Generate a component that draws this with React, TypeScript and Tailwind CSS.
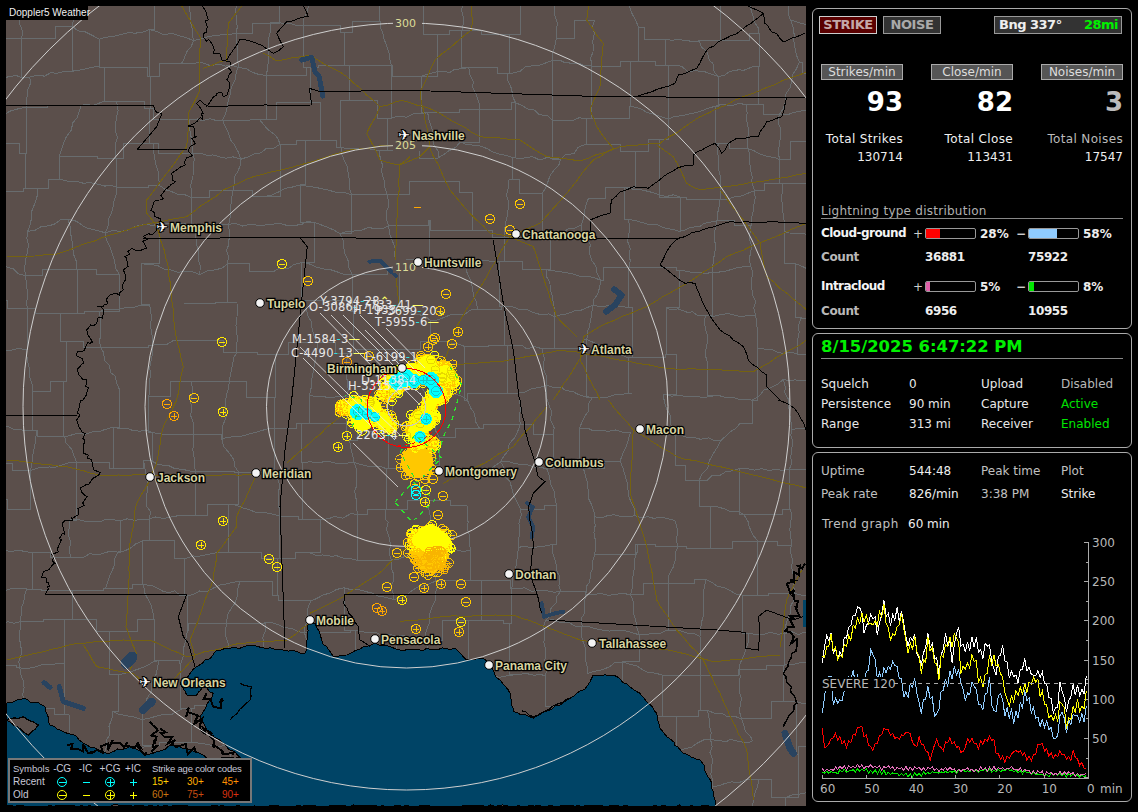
import React from "react";

type P = [number, number];
function mulberry(a: number) {
  return () => {
    a |= 0; a = (a + 0x6d2b79f5) | 0;
    let t = Math.imul(a ^ (a >>> 15), 1 | a);
    t = (t + Math.imul(t ^ (t >>> 7), 61 | t)) ^ t;
    return ((t ^ (t >>> 14)) >>> 0) / 4294967296;
  };
}
const z = (ox: number, oy: number, a: number[]): P[] => {
  const r: P[] = [];
  for (let i = 0; i < a.length; i += 2) r.push([ox + a[i] / 3, oy + a[i + 1] / 3]);
  return r;
};
const TL = (...a: number[]) => z(0, 0, a);
const TR = (...a: number[]) => z(400, 0, a);
const BL = (...a: number[]) => z(0, 400, a);
const BR = (...a: number[]) => z(400, 400, a);
const d = (p: P[], close = false) => "M" + p.map((q) => q[0].toFixed(1) + " " + q[1].toFixed(1)).join("L") + (close ? "Z" : "");
function wiggle(p: P[], amp: number, step: number, seed: number): P[] {
  const r = mulberry(seed);
  const out: P[] = [];
  for (let i = 0; i < p.length - 1; i++) {
    const [x0, y0] = p[i];
    const [x1, y1] = p[i + 1];
    const n = Math.max(1, Math.round(Math.hypot(x1 - x0, y1 - y0) / step));
    for (let k = 0; k < n; k++) {
      const t = k / n;
      const j = k === 0 ? 0 : amp;
      out.push([x0 + (x1 - x0) * t + (r() - 0.5) * j, y0 + (y1 - y0) * t + (r() - 0.5) * j]);
    }
  }
  out.push(p[p.length - 1]);
  return out;
}

function counties() {
  const r = mulberry(77);
  const cell = 40;
  const nx = 22, ny = 22;
  const v: P[][] = [];
  for (let i = 0; i < nx; i++) {
    v[i] = [];
    for (let j = 0; j < ny; j++) v[i][j] = [i * cell - 10 + (r() - 0.5) * 22, j * cell - 10 + (r() - 0.5) * 22];
  }
  let s = "";
  const edge = (a: P, b: P) => {
    if (r() < 0.12) return;
    const mode = r();
    if (mode < 0.5) {
      const mx = Math.abs(a[0] - b[0]) > Math.abs(a[1] - b[1]) ? a[0] + (b[0] - a[0]) * r() : a[0];
      const my = Math.abs(a[0] - b[0]) > Math.abs(a[1] - b[1]) ? a[1] : a[1] + (b[1] - a[1]) * r();
      s += d([a, [mx, my], [mx, b[1]], b]);
    } else {
      s += d(wiggle([a, b], 3.5, 7, Math.floor(r() * 99999)));
    }
  };
  for (let i = 0; i < nx; i++)
    for (let j = 0; j < ny; j++) {
      if (i < nx - 1) edge(v[i][j], v[i + 1][j]);
      if (j < ny - 1) edge(v[i][j], v[i][j + 1]);
    }
  return s;
}
const COUNTY = counties();

const STATE: string[] = [
  d(TL(18, 315, 460, 315, 467, 335, 485, 342, 470, 380, 413, 447, 560, 447)),
  d(wiggle(TL(605, 18, 625, 60, 610, 100, 640, 155, 665, 180, 690, 185, 695, 215, 680, 240, 690, 260, 670, 290, 650, 280, 620, 320, 600, 300, 590, 310, 605, 340, 590, 365, 565, 380, 590, 410, 570, 440, 575, 470, 545, 500, 515, 520, 525, 545, 495, 570, 480, 600, 460, 610, 465, 650, 480, 670, 470, 690, 430, 710, 440, 745, 395, 745, 375, 770, 385, 800, 370, 810, 370, 870, 330, 885, 310, 920, 290, 920, 310, 940, 290, 970, 260, 990, 270, 1030, 230, 1060, 250, 1090, 235, 1120, 260, 1140, 250, 1199), 6.5, 3.5, 3)),
  d(wiggle(BL(250, 0, 230, 60, 255, 120, 250, 160, 275, 180, 300, 220, 240, 265, 260, 290, 215, 355, 190, 385, 160, 470, 165, 490, 130, 515, 150, 560, 135, 583), 6.5, 3.5, 4)),
  d(BL(18, 45, 232, 45)),
  d(BL(135, 583, 560, 583, 535, 650, 550, 710, 565, 730, 585, 800)),
  d(wiggle(TL(625, 320, 795, 315, 935, 315, 928, 265, 960, 275, 1230, 270), 0.5, 30, 6)),
  d(wiggle(TL(680, 180, 720, 118, 770, 130, 820, 160, 850, 140, 830, 100, 860, 65, 925, 50, 910, 18), 2, 6, 8)),
  d(TR(0, 270, 610, 290, 1215, 293)),
  d(wiggle(TR(705, 290, 825, 250, 835, 225, 890, 205, 925, 145, 1025, 90, 1090, 40, 1045, 18), 2, 6, 9)),
  d(wiggle(TR(1090, 40, 1095, 70, 1150, 125, 1215, 100), 2, 5, 10)),
  d(wiggle(TR(1160, 290, 1145, 350, 1100, 365, 1075, 410, 1010, 415, 985, 430, 965, 460, 945, 430, 905, 450, 880, 465, 880, 495, 830, 505, 790, 530, 745, 565, 700, 560, 660, 575, 635, 600, 630, 640, 595, 650, 570, 660, 570, 695), 2, 6, 11)),
  d(TL(430, 715, 900, 713, 1230, 715)),
  d(TR(0, 715, 835, 715)),
  d(wiggle(TR(835, 715, 920, 685, 990, 665, 1230, 670), 1.5, 8, 12)),
  d(wiggle(TR(835, 715, 800, 755, 780, 795, 820, 825, 855, 850, 885, 850, 920, 930, 960, 990, 1030, 1040, 1045, 1080, 1100, 1125, 1100, 1160, 1140, 1199), 1.5, 6, 13)),
  d(wiggle(BR(1135, 0, 1170, 15, 1195, 40, 1218, 90), 1.5, 6, 14)),
  d(TL(900, 713, 922, 740, 905, 900, 875, 1199)),
  d(BL(875, 0, 855, 150, 840, 320, 850, 600, 855, 745)),
  d(TR(280, 720, 310, 910, 340, 1050, 358, 1199)),
  d(wiggle(BR(360, 0, 375, 90, 400, 170, 415, 230, 435, 245, 400, 280, 385, 320, 400, 430, 390, 520, 410, 580, 425, 640), 1.2, 7, 15)),
  d(BL(1035, 583, 1230, 583)),
  d(BR(0, 583, 410, 583)),
  d(wiggle(BL(1035, 583, 1030, 610, 1075, 680, 1080, 720, 1110, 740), 1.5, 6, 16)),
  d(BR(445, 660, 950, 690, 1035, 697, 1035, 745, 1075, 750, 1080, 690, 1075, 650, 1100, 630, 1140, 645, 1180, 660, 1210, 650)),
];

const HWY: string[] = [
  TL(545, 18, 600, 110, 600, 270, 565, 340, 560, 440, 440, 600, 440, 640, 470, 680, 505, 800, 515, 900, 530, 1020, 550, 1100, 530, 1199),
  BL(530, 0, 490, 80, 470, 190, 450, 240, 410, 310, 390, 430, 385, 580, 378, 680, 410, 760, 390, 810),
  TL(20, 770, 160, 765, 330, 705, 450, 670, 560, 650, 670, 570, 760, 530, 900, 495, 1050, 450, 1180, 435),
  TL(725, 18, 685, 70, 680, 180, 610, 205),
  TL(790, 160, 830, 183, 930, 165, 1040, 230, 1140, 320, 1210, 300),
  TL(1140, 320, 1100, 400, 1140, 480, 1195, 495, 1230, 470),
  TL(1200, 495, 1190, 700, 1185, 800, 1200, 950),
  TR(215, 18, 215, 90, 105, 180, 60, 280, 90, 440, 60, 470, 0, 495),
  TR(565, 18, 560, 60, 610, 130, 600, 260, 570, 330, 590, 380, 640, 445, 580, 480, 500, 580, 420, 670, 330, 710),
  TR(0, 300, 100, 330, 240, 410, 360, 420, 440, 470, 540, 483, 660, 440, 780, 430, 900, 350, 1030, 290, 1220, 215),
  TR(770, 435, 820, 470, 860, 550, 900, 570, 1080, 545, 1220, 520),
  TR(90, 445, 150, 570, 210, 640, 270, 700, 330, 710),
  TR(960, 570, 1030, 660, 1080, 730, 1100, 830, 1220, 930),
  TR(1220, 670, 980, 770, 860, 850, 740, 920, 620, 970, 550, 1010, 540, 1080, 600, 1199),
  TR(330, 710, 400, 740, 430, 830, 470, 950, 530, 1010),
  TR(550, 1060, 480, 1050, 300, 1085, 150, 1095),
  TR(550, 1060, 800, 1105, 1060, 1115, 1220, 1020),
  TR(550, 1060, 460, 1199),
  TR(330, 710, 260, 830, 170, 980, 130, 1090),
  BR(625, 0, 700, 90, 690, 280, 740, 440, 770, 600, 830, 690, 910, 780, 960, 880, 1040, 1050, 1060, 1199),
  BR(700, 90, 830, 170, 1000, 210, 1220, 265),
  BR(805, 750, 940, 785, 1140, 765),
  BR(1140, 740, 1160, 600, 1215, 490),
  BR(0, 665, 130, 650, 340, 645, 540, 720, 805, 750),
  BR(440, 20, 340, 140, 230, 200, 130, 250),
  BL(20, 180, 200, 200, 300, 225, 440, 225, 770, 225),
  BL(770, 225, 710, 350, 710, 380, 650, 460, 640, 540, 570, 720, 585, 770, 520, 840),
  BL(20, 780, 230, 730, 370, 720, 450, 720, 560, 770, 720, 730, 860, 720, 930, 670),
  BL(250, 735, 290, 800, 400, 820, 440, 850),
  BL(930, 640, 1030, 590, 1150, 510, 1230, 430),
  BL(860, 190, 1020, 50),
].map((p, i) => d(wiggle(p, 1.2, 9, 100 + i)));

const GULF = d(
  wiggle(
    [
      ...BL(18, 910, 70, 895, 135, 920, 150, 975, 230, 1010, 260, 1035, 320, 1060, 390, 1040, 440, 1065, 470, 1055, 520, 1035, 600, 1060, 620, 1075, 725, 1075, 680, 1040, 620, 990, 600, 950, 640, 880, 610, 860, 590, 885, 560, 885, 540, 850, 590, 800, 635, 770, 650, 750, 720, 745, 760, 735, 800, 745, 850, 750, 915, 760, 925, 670, 945, 670, 965, 720, 1000, 770, 1040, 765, 1090, 740, 1125, 730),
      ...BR(0, 750, 165, 745, 200, 780, 250, 775, 300, 840, 330, 880, 340, 935, 400, 955, 510, 895, 560, 860, 580, 825, 640, 825, 720, 880, 770, 940, 780, 985, 850, 1060, 900, 1080, 935, 1150, 945, 1218),
      [6, 806],
    ] as P[],
    2.2,
    4,
    21
  ),
  true
);
const LAKES: [string, number][] = [
  [d(TL(905, 180, 935, 172, 945, 215, 958, 230, 968, 288)), 5],
  [d(TL(1108, 785, 1140, 782, 1188, 828)), 4],
  [d(TR(642, 868, 665, 885, 645, 915, 618, 935)), 6],
  [d(BR(382, 310, 398, 322, 385, 350, 400, 380, 395, 412)), 4],
  [d(BR(425, 610, 432, 650, 465, 640, 490, 635)), 4],
  [d(BL(378, 790, 396, 772)), 11],
  [d(BL(430, 930, 455, 905)), 8],
  [d(BL(132, 848, 150, 862)), 5],
  [d(BL(178, 860, 190, 905, 250, 925)), 5],
  [d(BR(1155, 1000, 1170, 1045, 1180, 1060)), 7],
];
const ISLES = [
  d(wiggle(BL(18, 960, 70, 950, 115, 975, 85, 1005, 40, 975, 18, 960), 2, 5, 31), true),
  d(wiggle(BL(720, 850, 755, 860, 750, 900, 690, 960), 2, 5, 32)),
  d(wiggle(BR(365, 932, 400, 950, 510, 895), 2, 4, 33)),
];
const MARSH = [
  d(wiggle(BL(450, 965, 470, 1010, 460, 1060), 9, 3, 41)),
  d(wiggle(BL(480, 985, 530, 1040, 590, 1060), 10, 3, 42)),
  d(wiggle(BL(560, 930, 600, 975, 650, 1040, 700, 1065), 10, 3, 43)),
  d(wiggle(BL(620, 880, 640, 920, 670, 900), 10, 3, 44)),
  d(wiggle(BL(200, 1035, 290, 1050, 360, 1030, 440, 1055), 10, 3, 45)),
  d(wiggle(BR(1215, 490, 1170, 540, 1190, 620, 1165, 680, 1190, 740), 10, 3, 46)),
];

type K = "m" | "p" | "d";
type S = [number, number, K, string];
const Y = "#ffff00", O = "#ffc800", A = "#ffa600", C = "#00ffff", L = "#ffe800";
const LONE: S[] = [
  [282, 264, "m", L], [308, 281, "m", O], [222, 342, "m", L], [194, 398, "m", O], [167, 404, "m", A], [174, 416, "p", A],
  [223, 412, "p", L], [223, 521, "p", L], [201, 545, "p", L], [269, 559, "m", L], [277, 567, "m", L], [338, 447, "p", L],
  [347, 436, "p", L], [387, 587, "m", O], [402, 600, "p", L], [377, 608, "m", A], [382, 611, "p", A], [397, 553, "m", O],
  [414, 577, "m", O], [424, 588, "p", O], [441, 584, "p", O], [461, 584, "m", O], [466, 602, "m", O], [461, 622, "m", L],
  [459, 632, "p", O], [416, 629, "p", O], [520, 204, "m", O], [490, 219, "m", O], [510, 230, "m", O], [446, 294, "m", O],
  [440, 311, "p", O], [458, 332, "p", O], [452, 344, "m", O], [428, 347, "p", O], [433, 340, "m", O], [435, 338, "m", O],
  [441, 361, "m", O], [369, 356, "m", O], [347, 362, "m", A], [443, 496, "m", O], [438, 515, "m", O], [433, 479, "m", O],
  [425, 479, "m", O], [415, 484, "m", O], [426, 490, "m", L], [425, 502, "p", L], [417, 207, "d", A], [416, 495, "m", C], [416, 490, "m", C],
];
type B = [number, number, number, string];
const BLOBS_A: B[] = [
  [388, 391, 10, A], [397, 382, 12, O], [413, 376, 12, O], [427, 365, 11, O], [443, 371, 11, O], [450, 381, 9, O], [441, 394, 10, O], [430, 404, 9, A],
  [343, 408, 8, A], [357, 407, 11, O], [370, 412, 13, O], [384, 421, 10, O], [363, 420, 11, O], [390, 428, 6, A],
  [423, 420, 13, O], [417, 430, 12, O], [420, 440, 10, O], [431, 443, 6, O],
  [417, 462, 16, O],
  [430, 543, 18, Y], [419, 541, 11, Y], [440, 544, 12, Y], [430, 559, 14, O], [422, 553, 10, O], [436, 555, 12, O],
];
const BLOB_Y: B[] = [
  [395, 384, 10, Y], [412, 374, 11, Y], [428, 365, 10, Y], [445, 374, 9, Y], [438, 394, 9, Y], [431, 404, 6, Y], [357, 408, 9, Y], [369, 408, 12, Y], [362, 420, 11, Y], [382, 420, 8, Y], [424, 420, 11, Y], [418, 432, 10, Y], [421, 441, 8, Y], [430, 539, 14, Y], [420, 540, 8, Y], [441, 541, 9, Y],
];
const BLOB_C: B[] = [
  [397, 382, 8, C], [405, 378, 9, C], [414, 381, 7, C], [423, 380, 5, C], [431, 380, 8, C], [436, 391, 7, C], [358, 412, 8, C], [367, 414, 6, C], [375, 417, 5, C], [426, 419, 6, C], [420, 437, 6, C],
];
function cloud(): S[] {
  const r = mulberry(55);
  const out: S[] = [];
  BLOBS_A.forEach(([x, y, rad]) => {
    const n = Math.round(rad * 1.7);
    for (let i = 0; i < n; i++) {
      const a = r() * 6.283;
      const m = Math.sqrt(r()) * rad * 1.1;
      out.push([x + Math.cos(a) * m, y + Math.sin(a) * m, r() < 0.75 ? "m" : "p", y > 520 ? (y > 550 ? O : r() < 0.35 ? O : Y) : y > 450 ? O : r() < 0.7 ? Y : O]);
    }
  });
  [[422, 531], [412, 541], [408, 553], [418, 568], [432, 570], [449, 563], [452, 535], [442, 529], [430, 527], [428, 575], [411, 534]].forEach(([x, y]) => out.push([x, y, "m", O]));
  return out;
}
const CLOUD = cloud();
function overRings(): S[] {
  const r = mulberry(91);
  const out: S[] = [];
  for (let i = 0; i < 26; i++) out.push([414 + r() * 32, 550 + r() * 20, r() < 0.7 ? "m" : "p", "#f8b400"]);
  for (let i = 0; i < 18; i++) {
    const a = r() * 6.283;
    const m = 4 + r() * 9;
    const hub: P[] = [[395, 384], [412, 374], [428, 365], [445, 374], [369, 408], [424, 420], [418, 432]];
    const h = hub[Math.floor(r() * hub.length)];
    out.push([h[0] + Math.cos(a) * m, h[1] + Math.sin(a) * m, "m", "#e8d800"]);
  }
  return out;
}
const OVER = overRings();

function Sym({ x, y, k, c, r = 4.7 }: { x: number; y: number; k: K; c: string; r?: number }) {
  if (k === "d") return <path d={`M${x - 3.5} ${y}h7`} stroke={c} strokeWidth="1" />;
  return (
    <g fill="none" stroke={c} strokeWidth="1">
      <circle cx={x} cy={y} r={r} />
      <path d={`M${x - 3} ${y}h6`} />
      {k === "p" && <path d={`M${x} ${y - 3}v6`} />}
    </g>
  );
}

const CITIES: [string, number, number, number, boolean][] = [
  ["Nashville", 404, 135, 412, true], ["Memphis", 162, 227, 170, true], ["Atlanta", 584, 349, 591, true], ["New Orleans", 145, 682, 153, true],
  ["Chattanooga", 516, 234, 522, false], ["Huntsville", 418, 262, 424, false], ["Tupelo", 260, 303, 267, false], ["Macon", 640, 429, 646, false],
  ["Columbus", 539, 462, 545, false], ["Montgomery", 439, 471, 445, false], ["Jackson", 150, 477, 157, false], ["Meridian", 256, 473, 262, false],
  ["Dothan", 509, 574, 515, false], ["Mobile", 310, 620, 316, false], ["Pensacola", 375, 639, 381, false], ["Tallahassee", 592, 643, 599, false],
  ["Panama City", 489, 665, 495, false],
];

const CALLOUTS: [string, number, number, string, string][] = [
  ["Y-3794", 320, 305, "28", "⌃"],
  ["O-3086", 309, 311, "", ""],
  ["J-7733", 355, 309, "41", "—"],
  ["H-1933", 353, 314, "", ""],
  ["P-3699", 376, 315, "20", "⌄"],
  ["T-5955", 375, 326, "6", "—"],
  ["M-1584", 292, 343, "3", "—"],
  ["C-4490", 291, 357, "13", "—"],
  ["L-6199", 365, 361, "1", ""],
  ["D-1138", 361, 384, "4", ""],
  ["H-3315", 348, 390, "21", ""],
  ["2263", 356, 439, "4", "—"],
];
const LEADERS: string[] = [
  "M320 313L400 395", "M331 315L420 405", "M360 315L410 365", "M343 315L408 380", "M376 331L420 375", "M386 328L425 368",
  "M300 347L395 440", "M303 358L385 440", "M353 443L398 487", "M365 330L400 365", "M355 392L400 435",
];

const chartX0 = 810, chartY0 = 455;
function series(pts: number[], seed: number, amp: number) {
  const r = mulberry(seed);
  const src: P[] = [];
  for (let i = 0; i < pts.length; i += 2) src.push([chartX0 + pts[i] / 3, chartY0 + pts[i + 1] / 3]);
  const out: P[] = [];
  let seg = 0;
  let up = false;
  for (let x = 822.3; x <= 1088.2; x += 2.2) {
    while (seg < src.length - 2 && src[seg + 1][0] < x) seg++;
    const [a, b] = [src[seg], src[seg + 1]];
    const t = Math.min(1, Math.max(0, (x - a[0]) / (b[0] - a[0])));
    up = !up;
    out.push([x, a[1] + (b[1] - a[1]) * t + (up ? -1 : 1) * r() * amp]);
  }
  return d(out);
}
const WHITE = series([37, 640, 42, 580, 58, 530, 70, 590, 90, 600, 105, 550, 125, 495, 150, 455, 165, 530, 185, 470, 205, 530, 220, 445, 240, 510, 260, 475, 280, 475, 290, 570, 315, 540, 330, 640, 355, 545, 375, 590, 385, 660, 400, 565, 415, 550, 430, 620, 442, 485, 455, 590, 475, 580, 500, 550, 515, 620, 535, 560, 555, 670, 575, 570, 590, 640, 620, 670, 645, 625, 670, 665, 690, 650, 715, 710, 735, 770, 755, 680, 770, 770, 785, 690, 810, 720, 835, 670], 1, 8);
const YEL = series([37, 620, 60, 550, 90, 620, 125, 530, 150, 495, 185, 510, 220, 465, 240, 550, 280, 490, 290, 575, 315, 555, 335, 660, 355, 560, 385, 660, 400, 590, 440, 540, 455, 650, 490, 600, 515, 700, 540, 610, 570, 640, 590, 740, 625, 710, 650, 690, 680, 680, 715, 770, 735, 800, 755, 740, 770, 800, 800, 750, 820, 770, 835, 700], 2, 8);
const BLUE = series([37, 790, 45, 710, 60, 650, 70, 740, 90, 740, 125, 660, 165, 680, 185, 580, 205, 680, 225, 640, 260, 630, 285, 730, 315, 670, 330, 770, 355, 700, 380, 790, 400, 690, 440, 640, 470, 740, 490, 680, 515, 770, 540, 680, 550, 790, 570, 700, 585, 770, 620, 790, 645, 720, 690, 800, 715, 820, 737, 860, 755, 750, 770, 830, 790, 780, 820, 790, 835, 750], 3, 7);
const RED = series([37, 830, 45, 885, 75, 835, 110, 875, 150, 810, 185, 885, 225, 820, 260, 855, 295, 825, 315, 875, 330, 850, 362, 915, 375, 855, 395, 885, 415, 855, 460, 890, 475, 850, 505, 875, 530, 850, 550, 855, 560, 895, 590, 915, 615, 885, 665, 915, 690, 865, 725, 905, 750, 895, 780, 910, 790, 895, 805, 925, 830, 940], 4, 3.5);
const PINK = series([37, 945, 150, 935, 300, 940, 440, 945, 600, 940, 700, 955, 835, 958], 5, 2.5);
const GREEN = series([37, 955, 150, 945, 300, 960, 440, 948, 600, 945, 700, 960, 835, 962], 6, 2.2);

function Chart() {
  const yOf = (v: number) => 777.6 - v * 0.784;
  const ticks = [0, 25, 50, 75, 100, 125, 150, 175, 200, 225, 250, 275, 300];
  return (
    <svg width="318" height="270" viewBox="813 530 318 270" className="block" shapeRendering="crispEdges">
      <line x1="1088.5" y1="542" x2="1088.5" y2="778" stroke="#aaa" />
      <line x1="822" y1="778.5" x2="1089" y2="778.5" stroke="#aaa" />
      {ticks.map((t) => (
        <line key={t} x1={t % 50 === 0 ? 1084 : 1086} x2="1089" y1={yOf(t)} y2={yOf(t)} stroke="#aaa" />
      ))}
      {[0, 1, 2, 3, 4, 5, 6].map((i) => (
        <line key={i} x1={822.5 + i * 44.33} x2={822.5 + i * 44.33} y1="775" y2="779" stroke="#aaa" />
      ))}
      <path d={GREEN} fill="none" stroke="#00e800" />
      <path d={PINK} fill="none" stroke="#e070b8" />
      <path d={RED} fill="none" stroke="#ff0000" />
      <path d={BLUE} fill="none" stroke="#90ccff" />
      <path d={WHITE} fill="none" stroke="#ffffff" />
      <path d={YEL} fill="none" stroke="#ffff00" />
      <line x1="822" x2="1088" y1="683.5" y2="683.5" stroke="#aaa" strokeDasharray="4 4" />
      <rect x="822" y="677" width="70" height="14" fill="#000" />
      <g shapeRendering="auto" fontSize="12" fill="#b8b8b8">
        <text x="822" y="688">SEVERE 120</text>
        {[300, 250, 200, 150, 100, 50].map((v) => (
          <text key={v} x={1092} y={yOf(v) + 4.5}>{v}</text>
        ))}
        {[60, 50, 40, 30, 20, 10].map((v, i) => (
          <text key={v} x={820 + i * 44.33} y="793">{v}</text>
        ))}
        <text x="1087" y="793">0</text>
        <text x="1100" y="793">min</text>
      </g>
    </svg>
  );
}

function Bar({ pct, color }: { pct: number; color: string }) {
  return (
    <div className="h-[11px] w-[51px] rounded-[2px] border border-[#999] bg-black overflow-hidden">
      <div className="h-full" style={{ width: `${pct}%`, backgroundColor: color }} />
    </div>
  );
}

function Panel({ className, children }: { className: string; children: React.ReactNode }) {
  return <div className={"rounded-[6px] border border-[#aaa] " + className}>{children}</div>;
}

function LegendIcon({ k, c }: { k: "cm" | "cp" | "m" | "p"; c: string }) {
  return (
    <svg width="12" height="12" viewBox="0 0 12 12" fill="none" stroke={c} strokeWidth="1" className="block mx-auto" shapeRendering="crispEdges">
      {(k === "cm" || k === "cp") && <circle cx="6" cy="6" r="4.5" shapeRendering="auto" />}
      <path d="M2.5 6.5h7" />
      {(k === "cp" || k === "p") && <path d="M6.5 3v7" />}
    </svg>
  );
}

function Legend() {
  const age = (t: string, c: string) => (
    <span className="w-[35px]" style={{ color: c }}>{t}</span>
  );
  const cols = "grid grid-cols-[40px_18px_29px_20px_26px_1fr] items-center h-[13px] whitespace-nowrap";
  return (
    <div className="absolute left-[2px] top-[752px] h-[45px] w-[244px] border-2 border-[#777] bg-black pl-[3px] pt-[2px] font-['Liberation_Sans',sans-serif] text-[10px] leading-[13px] text-[#c8c8d8]">
      <div className={cols}>
        <span className="text-[9.5px]">Symbols</span>
        <span className="justify-self-center tracking-[-0.2px]">-CG</span>
        <span className="justify-self-center">-IC</span>
        <span className="justify-self-center">+CG</span>
        <span className="justify-self-center">+IC</span>
        <span className="pl-[6px] text-[9.5px] tracking-[-0.2px]">Strike age color codes</span>
      </div>
      <div className={cols}>
        <span>Recent</span>
        <LegendIcon k="cm" c="#00ffff" />
        <LegendIcon k="m" c="#00ffff" />
        <LegendIcon k="cp" c="#00ffff" />
        <LegendIcon k="p" c="#00ffff" />
        <div className="flex pl-[6px]">{age("15+", "#ffcc00")}{age("30+", "#ffaa00")}{age("45+", "#ff9000")}</div>
      </div>
      <div className={cols}>
        <span>Old</span>
        <LegendIcon k="cm" c="#ffff00" />
        <LegendIcon k="m" c="#ffff00" />
        <LegendIcon k="cp" c="#ffff00" />
        <LegendIcon k="p" c="#ffff00" />
        <div className="flex pl-[6px]">{age("60+", "#c87410")}{age("75+", "#c84c10")}{age("90+", "#d83010")}</div>
      </div>
    </div>
  );
}

function RadarMap() {
  const RINGS: [number, string][] = [[140, "110"], [261.5, "205"], [383.5, "300"], [505, ""]];
  const cx = 406.5, cy = 406.5;
  const labelCls = "font-['Liberation_Sans',sans-serif] [paint-order:stroke]";
  return (
    <div className="relative h-[800px] w-[800px] shrink-0 overflow-hidden">
      <svg width="800" height="800" viewBox="6 6 800 800" className="block bg-[#5b4f4b]" shapeRendering="crispEdges">
        <path d={COUNTY} fill="none" stroke="#686c6e" strokeWidth="1" />
        {HWY.map((p, i) => <path key={i} d={p} fill="none" stroke="#756210" strokeWidth="1" />)}
        <path d={GULF} fill="#004466" stroke="#000" strokeWidth="1" />
        {ISLES.map((p, i) => <path key={i} d={p} fill={i === 0 ? "#5b4f4b" : "none"} stroke="#000" strokeWidth="1.2" />)}
        {MARSH.map((p, i) => <path key={i} d={p} fill="none" stroke="#000" strokeWidth="2" />)}
        <path d={d(wiggle(BR(1190, 740, 1150, 820, 1190, 910, 1150, 980), 3, 4, 61))} fill="none" stroke="#000" strokeWidth="1.5" />
        <rect x="803" y="600" width="3" height="27" fill="#004466" />
        {LAKES.map(([p, w], i) => <path key={i} d={p} fill="none" stroke="#29435f" strokeWidth={w} strokeLinejoin="round" strokeLinecap="round" />)}
        {STATE.map((p, i) => <path key={i} d={p} fill="none" stroke="#000" strokeWidth="1" />)}
        {RINGS.map(([r]) => <circle key={r} cx={cx} cy={cy} r={r} fill="none" stroke="#cfcfcf" strokeWidth="1" shapeRendering="auto" />)}
        {RINGS.filter((x) => x[1]).map(([r, t]) => (
          <g key={t}>
            <rect x={cx - 14} y={cy - r - 7} width="29" height="13" fill="#5b4f4b" />
            <text x={cx - 1} y={cy - r + 4} textAnchor="middle" fontSize="11" fill="#dcdc98" shapeRendering="auto">{t}</text>
          </g>
        ))}
        {BLOBS_A.map(([x, y, r, c], i) => <circle key={i} cx={x} cy={y} r={r} fill={c} />)}
        {CLOUD.map(([x, y, k, c], i) => <Sym key={i} x={x} y={y} k={k} c={c} r={4.3} />)}
        {BLOB_Y.map(([x, y, r, c], i) => <circle key={i} cx={x} cy={y} r={r} fill={c} />)}
        {OVER.map(([x, y, k, c], i) => <Sym key={i} x={x} y={y} k={k} c={c} r={4.3} />)}
        {BLOB_C.map(([x, y, r, c], i) => <circle key={i} cx={x} cy={y} r={r} fill={c} />)}
        {BLOB_C.map(([x, y], i) => <Sym key={i} x={x} y={y} k={i % 3 ? "m" : "p"} c="#10c8c8" r={4.3} />)}
        <g fill="none" stroke="#2ce82c" strokeWidth="1.2" strokeDasharray="4 5">
          <path d="M395 502L413 482L435 500L412 522Z" />
          <path d="M400 452L415 435L442 458L417 482Z" />
          <path d="M450 367L462 385L452 420L445 433L435 462" />
          <path d="M352 427L362 400L345 395" />
        </g>
        {LONE.map(([x, y, k, c], i) => <Sym key={i} x={x} y={y} k={k} c={c} />)}
        <g fill="none" stroke="#e8e8e8" strokeWidth="0.8" shapeRendering="auto">
          {LEADERS.map((p, i) => <path key={i} d={p} />)}
        </g>
        <circle cx={cx} cy={cy + 0.5} r="19" fill="none" stroke="#c8c8c8" />
        <circle cx={cx} cy={cy + 1.5} r="39.5" fill="none" stroke="#ff0000" />
        <path d="M398 446L420 442L432 432" fill="none" stroke="#ff0000" strokeDasharray="3 4" />
        <g shapeRendering="auto" fontSize="11.5" fill="#e8e8e8">
          {CALLOUTS.map(([t, x, y, n, s], i) => (
            <text key={i} x={x} y={y} className="tracking-[0.2px]">
              {t}<tspan fill="#30e0e0">-</tspan>{n}<tspan fill="#ffff66">{s}</tspan>
            </text>
          ))}
        </g>
        <Sym x={347} y={436} k="p" c={L} />
        {CITIES.map(([name, x, y, tx, plane]) => (
          <g key={name} shapeRendering="auto">
            {plane ? (
              <text x={x} y={y + 5} textAnchor="middle" fontSize="14" fill="#fff" stroke="#000" strokeWidth="2" className="[paint-order:stroke]">✈</text>
            ) : (
              <circle cx={x} cy={y} r="4.3" fill="#f4f4f4" stroke="#000" strokeWidth="1" />
            )}
            <text x={tx} y={y + 4.5} fontSize="12" fontWeight="700" fill="#d8d4a0" stroke="#000" strokeWidth="2.5" className={labelCls}>{name}</text>
          </g>
        ))}
        <g shapeRendering="auto">
          <circle cx="402" cy="368" r="4.3" fill="#f4f4f4" stroke="#000" strokeWidth="1" />
          <text x="327" y="373" fontSize="12" fontWeight="700" fill="#d8d4a0" stroke="#000" strokeWidth="2.5" className={labelCls}>Birmingham</text>
        </g>
      </svg>
      <div className="absolute left-0 top-0 flex h-[14px] w-[82px] items-center whitespace-nowrap bg-black pl-[3px] font-['Liberation_Sans',sans-serif] text-[10px] text-[#f0f0f0]">Doppler5 Weather</div>
      <Legend />
    </div>
  );
}

export default function App() {
  return (
    <div className="flex h-[812px] w-[1138px] overflow-hidden bg-black p-[6px] font-['DejaVu_Sans',sans-serif] text-[12px] leading-[14px] text-[#e8e8e8]">
      <RadarMap />
      <div className="ml-[6px] flex w-[320px] shrink-0 flex-col gap-[4px] pt-[2px]">
        <Panel className="h-[321px] px-[8px] pt-[7px]">
          <div className="-ml-[2px] flex h-[18px] items-stretch gap-[6px]">
            <div className="flex w-[58px] items-center justify-center border border-[#ccc] bg-[#5a0000] text-[13px] font-bold tracking-[-0.4px] text-[#c4a8a8]">STRIKE</div>
            <div className="flex w-[58px] items-center justify-center border border-[#999] bg-[#333] text-[13px] font-bold tracking-[-0.4px] text-[#aaa]">NOISE</div>
            <div className="ml-[47px] flex w-[128px] items-center justify-between border border-[#999] bg-[#333] pl-[4px] pr-[3px] text-[13px] font-bold tracking-[-0.5px] text-[#eee]">
              <span>Bng 337°</span>
              <span className="text-[#00f000]">28mi</span>
            </div>
          </div>
          <div className="mt-[30px] grid grid-cols-[82px_82px_82px] gap-x-[28px]">
            {[["Strikes/min", "93", "Total Strikes", "130714", "#fff", "#f0f0f0"], ["Close/min", "82", "Total Close", "113431", "#fff", "#f0f0f0"], ["Noises/min", "3", "Total Noises", "17547", "#bbb", "#bbb"]].map(([l, n, t, c, col, tc]) => (
              <div key={l} className="text-right">
                <div className="flex h-[16px] items-center justify-center border border-[#aaa] bg-[#555] text-[#ddd]">{l}</div>
                <div className="mt-[4px] text-[26px] font-bold leading-[36px]" style={{ color: col }}>{n}</div>
                <div className="mt-[12px] whitespace-nowrap tracking-[0.35px]" style={{ color: tc }}>{t}</div>
                <div className="mt-[4px] text-[#eee]">{c}</div>
              </div>
            ))}
          </div>
          <div className="mt-[41px] h-[14px] border-b border-[#888] text-[12px] leading-[12px] tracking-[0.25px] text-[#b0b0b0]">Lightning type distribution</div>
          <div className="mt-[7px] grid grid-cols-[92px_12px_52px_39px_12px_52px_auto] items-center font-bold">
            <span className="h-[15px] whitespace-nowrap tracking-[-0.55px] text-[#f4f4f4]">Cloud-ground</span>
            <span className="font-normal text-[#ccc]">+</span>
            <Bar pct={28} color="#ff0000" />
            <span className="pl-[3px] text-[#eee]">28%</span>
            <span className="text-[#ccc]">−</span>
            <Bar pct={58} color="#90ccff" />
            <span className="pl-[3px] text-[#eee]">58%</span>
          </div>
          <div className="mt-[9px] grid grid-cols-[104px_103px_auto] font-bold tracking-[-0.4px]">
            <span className="text-[#b8b8b8]">Count</span>
            <span className="text-[#eee]">36881</span>
            <span className="text-[#eee]">75922</span>
          </div>
          <div className="mt-[15px] grid grid-cols-[92px_12px_52px_39px_12px_52px_auto] items-center font-bold">
            <span className="h-[15px] tracking-[-0.55px] text-[#f4f4f4]">Intracloud</span>
            <span className="font-normal text-[#ccc]">+</span>
            <Bar pct={8} color="#e060a8" />
            <span className="pl-[3px] text-[#eee]">5%</span>
            <span className="text-[#ccc]">−</span>
            <Bar pct={10} color="#00e800" />
            <span className="pl-[3px] text-[#eee]">8%</span>
          </div>
          <div className="mt-[10px] grid grid-cols-[104px_103px_auto] font-bold tracking-[-0.4px]">
            <span className="text-[#b8b8b8]">Count</span>
            <span className="text-[#eee]">6956</span>
            <span className="text-[#eee]">10955</span>
          </div>
        </Panel>
        <Panel className="h-[115px] px-[8px] pt-[3px]">
          <div className="h-[22px] border-b border-[#888] text-[16.4px] font-bold leading-[20px] text-[#00f000]">8/15/2025 6:47:22 PM</div>
          <div className="mt-[18px] grid grid-cols-[88px_72px_80px_auto] gap-y-[6px]">
            <span>Squelch</span><span>0</span><span>Upload</span><span className="text-[#b8b8b8]">Disabled</span>
            <span className="tracking-[0.15px]">Persistence</span><span>90 min</span><span>Capture</span><span className="text-[#00e000]">Active</span>
            <span>Range</span><span>313 mi</span><span>Receiver</span><span className="text-[#00e800]">Enabled</span>
          </div>
        </Panel>
        <Panel className="h-[350px]">
          <div className="px-[8px] pt-[11px]">
            <div className="grid grid-cols-[88px_72px_80px_auto] gap-y-[9px] text-[#c0c0c0]">
              <span>Uptime</span><span className="text-[#eee]">544:48</span><span>Peak time</span><span>Plot</span>
              <span>Peak rate</span><span className="text-[#eee]">826/min</span><span>3:38 PM</span><span className="text-[#eee]">Strike</span>
            </div>
            <div className="mt-[16px] flex pl-[1px] text-[#c0c0c0]">
              <span className="w-[86px] tracking-[0.45px]">Trend graph</span><span className="text-[#eee]">60 min</span>
            </div>
          </div>
          <div className="mt-[-1px]"><Chart /></div>
        </Panel>
      </div>
    </div>
  );
}
